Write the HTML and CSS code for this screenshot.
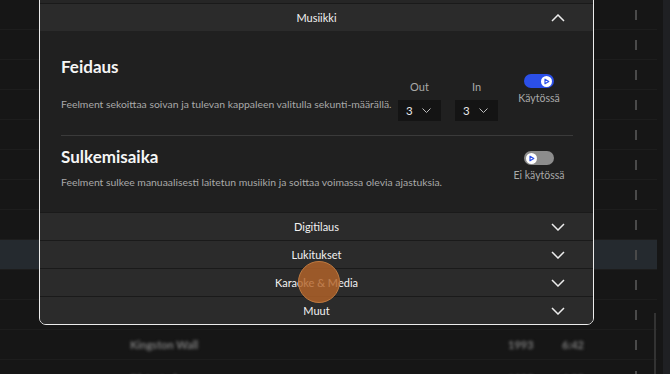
FILE: index.html
```html
<!DOCTYPE html>
<html lang="fi">
<head>
    <meta charset="UTF-8">
    <meta name="viewport" content="width=device-width, initial-scale=1.0">
    <title>Asetukset</title>
    <link rel="stylesheet" href="styles.css">
</head>
<body>

    <div class="page">
        <div class="library">
            <div class="track-row"><span class="cell-title"></span><span class="cell-year"></span><span class="cell-time"></span><span class="handle"></span></div>
            <div class="track-row"><span class="cell-title"></span><span class="cell-year"></span><span class="cell-time"></span><span class="handle"></span></div>
            <div class="track-row"><span class="cell-title"></span><span class="cell-year"></span><span class="cell-time"></span><span class="handle"></span></div>
            <div class="track-row"><span class="cell-title"></span><span class="cell-year"></span><span class="cell-time"></span><span class="handle"></span></div>
            <div class="track-row"><span class="cell-title"></span><span class="cell-year"></span><span class="cell-time"></span><span class="handle"></span></div>
            <div class="track-row"><span class="cell-title"></span><span class="cell-year"></span><span class="cell-time"></span><span class="handle"></span></div>
            <div class="track-row"><span class="cell-title"></span><span class="cell-year"></span><span class="cell-time"></span><span class="handle"></span></div>
            <div class="track-row"><span class="cell-title"></span><span class="cell-year"></span><span class="cell-time"></span><span class="handle"></span></div>
            <div class="track-row selected"><span class="cell-title"></span><span class="cell-year"></span><span class="cell-time"></span><span class="handle"></span></div>
            <div class="track-row"><span class="cell-title"></span><span class="cell-year"></span><span class="cell-time"></span><span class="handle"></span></div>
            <div class="track-row"><span class="cell-title"></span><span class="cell-year"></span><span class="cell-time"></span><span class="handle"></span></div>
            <div class="track-row"><span class="cell-title">Kingston Wall</span><span class="cell-year">1993</span><span class="cell-time">6:42</span><span class="handle"></span></div>
            <div class="track-row last"><span class="cell-title">Distorted</span><span class="cell-year">1995</span><span class="cell-time">4:05</span><span class="handle"></span></div>
            <div class="scroll-thumb"></div>
        </div>
        <div class="scroll-track"></div>
    </div>

    <div class="modal">
        <div class="section-head">
            <span></span><span>Yleiset</span><span></span>
        </div>

        <div class="section-head">
            <span></span>
            <span>Musiikki</span>
            <svg class="chevron" width="14" height="8" viewBox="0 0 14 8"><polyline points="1,7 7,1 13,7" /></svg>
        </div>

        <div class="section-body">
            <div class="setting setting-fade">
                <div class="setting-text">
                    <h3>Feidaus</h3>
                    <p>Feelment sekoittaa soivan ja tulevan kappaleen valitulla sekunti-määrällä.</p>
                </div>
                <div class="fade-fields">
                    <div class="fade-field">
                        <span class="field-label">Out</span>
                        <div class="select">3
                            <svg width="9" height="5" viewBox="0 0 9 5"><polyline points="0.5,0.5 4.5,4.5 8.5,0.5" /></svg>
                        </div>
                    </div>
                    <div class="fade-field">
                        <span class="field-label">In</span>
                        <div class="select">3
                            <svg width="9" height="5" viewBox="0 0 9 5"><polyline points="0.5,0.5 4.5,4.5 8.5,0.5" /></svg>
                        </div>
                    </div>
                </div>
                <div class="switch-group">
                    <div class="switch on">
                        <span class="knob">
                            <svg width="7" height="7" viewBox="0 0 7 7"><polygon points="2,1.2 5.8,3.5 2,5.8" /></svg>
                        </span>
                    </div>
                    <span class="switch-label">Käytössä</span>
                </div>
            </div>

            <div class="setting setting-close">
                <div class="setting-text">
                    <h3>Sulkemisaika</h3>
                    <p>Feelment sulkee manuaalisesti laitetun musiikin ja soittaa voimassa olevia ajastuksia.</p>
                </div>
                <div class="switch-group">
                    <div class="switch">
                        <span class="knob">
                            <svg width="7" height="7" viewBox="0 0 7 7"><polygon points="2,1.2 5.8,3.5 2,5.8" /></svg>
                        </span>
                    </div>
                    <span class="switch-label">Ei käytössä</span>
                </div>
            </div>
        </div>

        <div class="section-head">
            <span></span>
            <span>Digitilaus</span>
            <svg class="chevron" width="14" height="8" viewBox="0 0 14 8"><polyline points="1,1 7,7 13,1" /></svg>
        </div>
        <div class="section-head">
            <span></span>
            <span>Lukitukset</span>
            <svg class="chevron" width="14" height="8" viewBox="0 0 14 8"><polyline points="1,1 7,7 13,1" /></svg>
        </div>
        <div class="section-head">
            <span></span>
            <span>Karaoke &amp; Media</span>
            <svg class="chevron" width="14" height="8" viewBox="0 0 14 8"><polyline points="1,1 7,7 13,1" /></svg>
        </div>
        <div class="section-head">
            <span></span>
            <span>Muut</span>
            <svg class="chevron" width="14" height="8" viewBox="0 0 14 8"><polyline points="1,1 7,7 13,1" /></svg>
        </div>
    </div>

    <div class="click-dot"></div>

</body>
</html>
```

FILE: styles.css
```css
body {
    margin: 0;
    background-color: #161616;
    font-family: Lato, "Noto Sans", sans-serif;
    color: #f0f0f0;
    overflow: hidden;
}
.page {
    display: flex;
    height: 374px;
}
.library {
    position: relative;
    width: 657px;
}
.track-row {
    display: flex;
    align-items: center;
    height: 30px;
    box-sizing: border-box;
    border-bottom: 1px solid #1d1d1d;
    font-size: 11px;
    font-weight: 700;
    color: #7a7a7a;
}
.track-row.last {
    height: 26px;
    align-items: flex-end;
}
.track-row.selected {
    background-color: #252a2f;
}
.cell-title {
    margin-left: 130px;
    flex: 1;
    filter: blur(1.4px);
}
.cell-year {
    width: 54px;
    filter: blur(1.4px);
}
.cell-time {
    width: 73px;
    filter: blur(1.4px);
}
.handle {
    width: 2px;
    height: 10px;
    margin-right: 20px;
    background-color: #4a4a4a;
    filter: blur(0.6px);
}
.track-row.last .handle {
    margin-bottom: 4px;
}
.scroll-thumb {
    position: absolute;
    right: 1px;
    top: 313px;
    width: 2px;
    height: 70px;
    background-color: #333;
}
.scroll-track {
    flex: 1;
    margin-left: 6px;
    background-color: #1f2023;
}

/* asetusikkuna */
.modal {
    position: absolute;
    left: 39px;
    top: -25px;
    width: 553px;
    border: 1px solid #ececec;
    border-radius: 7px;
    background-color: #202020;
    overflow: hidden;
}
.section-head {
    display: grid;
    grid-template-columns: 1fr auto 1fr;
    align-items: center;
    height: 27px;
    background-color: #2b2b2b;
    border-top: 1px solid #1a1a1a;
    font-size: 11px;
    color: #f2f2f2;
}
.section-head:first-child {
    border-top: none;
    background-color: #262626;
}
.chevron {
    justify-self: end;
    margin-right: 28px;
    fill: none;
    stroke: #ececec;
    stroke-width: 1.5;
}
.section-body {
    padding: 0 20px 0 21px;
}
.setting {
    display: flex;
    align-items: flex-start;
}
.setting-fade {
    padding: 24px 0 14px;
    border-bottom: 1px solid #3a3a3a;
}
.setting-close {
    padding: 9px 0 22px;
}
.setting-text {
    flex: 1;
    min-width: 0;
}
.setting-text h3 {
    margin: 0;
    font-size: 17px;
    line-height: 24px;
    font-weight: 700;
    color: #f5f5f5;
}
.setting-text p {
    margin: 0;
    font-size: 10.4px;
    line-height: 16px;
    color: #a9a9a9;
    white-space: nowrap;
}
.setting-fade p {
    margin-top: 17px;
}
.setting-close p {
    margin-top: 5px;
}
.fade-fields {
    display: flex;
    gap: 14px;
    margin-top: 24px;
}
.fade-field {
    display: flex;
    flex-direction: column;
    align-items: center;
    gap: 6px;
}
.field-label {
    font-size: 11px;
    line-height: 15px;
    color: #a9a9a9;
}
.select {
    display: flex;
    align-items: center;
    justify-content: space-between;
    width: 43px;
    height: 21px;
    box-sizing: border-box;
    padding: 0 10px 0 8px;
    background-color: #141414;
    font-size: 11.5px;
    color: #e8e8e8;
}
.select svg {
    fill: none;
    stroke: #bdbdbd;
    stroke-width: 1;
}
.switch-group {
    display: flex;
    flex-direction: column;
    align-items: center;
    width: 60px;
    margin-left: 11px;
    margin-right: 4px;
}
.setting-fade .switch-group {
    margin-top: 19px;
}
.setting-close .switch-group {
    margin-top: 6px;
}
.switch {
    display: flex;
    align-items: center;
    width: 30px;
    height: 14px;
    box-sizing: border-box;
    padding: 0 2px;
    border-radius: 7px;
    background-color: #8c8c8c;
}
.switch.on {
    justify-content: flex-end;
    background-color: #2b4fe8;
}
.knob {
    display: flex;
    align-items: center;
    justify-content: center;
    width: 11px;
    height: 11px;
    border-radius: 50%;
    background-color: #fff;
}
.knob svg {
    fill: none;
    stroke: #2b4fe8;
    stroke-width: 1.2;
    stroke-linejoin: round;
}
.switch-label {
    margin-top: 3px;
    font-size: 10.5px;
    line-height: 15px;
    color: #a9a9a9;
    white-space: nowrap;
}

/* klikkausmerkki */
.click-dot {
    position: absolute;
    left: 298px;
    top: 261px;
    width: 40px;
    height: 40px;
    border-radius: 50%;
    border: 1px solid #c07a40;
    background-color: rgba(180, 100, 42, 0.82);
}
```
